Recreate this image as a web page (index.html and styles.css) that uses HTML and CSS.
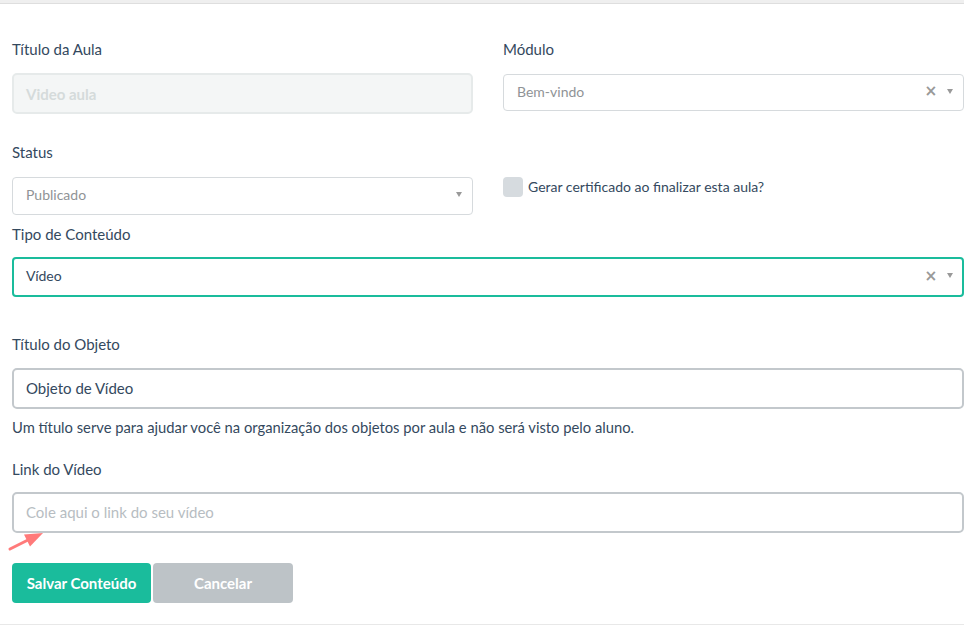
FILE: index.html
```html
<!DOCTYPE html>
<html lang="pt">
<head>
<meta charset="utf-8">
<title>Conteúdo</title>
<link rel="stylesheet" href="styles.css">
</head>
<body>
<div class="topbar"></div>
<form class="form">
  <div class="row row-1">
    <div class="col">
      <label class="label">Título da Aula</label>
      <div class="input input-disabled"><span class="placeholder-light">Video aula</span></div>
    </div>
    <div class="col col-right">
      <label class="label">Módulo</label>
      <div class="select">
        <span class="select-value muted">Bem-vindo</span>
        <span class="select-clear">×</span>
        <span class="select-arrow-zone"><span class="select-arrow"></span></span>
      </div>
    </div>
  </div>

  <div class="row row-2">
    <div class="col">
      <label class="label">Status</label>
      <div class="select select-status">
        <span class="select-value muted">Publicado</span>
        <span class="select-arrow-zone"><span class="select-arrow"></span></span>
      </div>
    </div>
    <div class="col col-check">
      <div class="check">
        <span class="checkbox"></span>
        <span class="check-text">Gerar certificado ao finalizar esta aula?</span>
      </div>
    </div>
  </div>

  <div class="field field-tipo">
    <label class="label">Tipo de Conteúdo</label>
    <div class="select select-focus">
      <span class="select-value">Vídeo</span>
      <span class="select-clear">×</span>
      <span class="select-arrow-zone"><span class="select-arrow"></span></span>
    </div>
  </div>

  <div class="field field-objeto">
    <label class="label">Título do Objeto</label>
    <div class="input input-text"><span class="value">Objeto de Vídeo</span></div>
    <p class="help">Um título serve para ajudar você na organização dos objetos por aula e não será visto pelo aluno.</p>
  </div>

  <div class="field field-link">
    <label class="label">Link do Vídeo</label>
    <div class="link-wrap">
      <div class="input input-text"><span class="placeholder">Cole aqui o link do seu vídeo</span></div>
      <svg class="pointer" width="46" height="22" viewBox="0 0 46 22">
        <path d="M10 17 L28 8" stroke="#ff7a7a" stroke-width="3" stroke-linecap="round" fill="none"/>
        <polygon points="43,1 24,2.5 30,14.5" fill="#ff7a7a"/>
      </svg>
    </div>
  </div>

  <div class="actions">
    <button type="button" class="btn btn-primary">Salvar Conteúdo</button>
    <button type="button" class="btn btn-default">Cancelar</button>
  </div>
</form>
<div class="bottomline"></div>
</body>
</html>
```

FILE: styles.css
```css
* { box-sizing: border-box; }
html, body { margin: 0; padding: 0; background: #fff; }
body {
  width: 964px;
  font-family: Lato, "Open Sans", "Liberation Sans", sans-serif;
  color: #34495e;
  font-size: 14px;
}
.topbar {
  height: 4px;
  background: #efefef;
  border-bottom: 1px solid #dedede;
}
.form {
  padding: 0 0 0 12px;
}
.row {
  display: grid;
  grid-template-columns: 461px 461px;
  column-gap: 30px;
}
.col { display: flex; flex-direction: column; }
.label {
  display: block;
  font-size: 15px;
  line-height: 20px;
  color: #34495e;
}
.row-1 { margin-top: 35px; }
.row-1 .label { margin-bottom: 14px; }
.row-1 .col-right .label { margin-bottom: 15px; }
.row-2 { margin-top: 28px; }
.row-2 .label { margin-bottom: 15px; }

.input {
  display: flex;
  align-items: center;
  border-radius: 5px;
  font-size: 15px;
}
.input-disabled {
  height: 41px;
  background: #f4f6f6;
  border: 2px solid #e6eaea;
  padding-left: 12px;
}
.placeholder-light { color: #d5dbdb; font-weight: 700; }
.input-text {
  height: 41px;
  border: 2px solid #c3c8cc;
  padding-left: 12px;
  padding-bottom: 1px;
  background: #fff;
}
.value { color: #34495e; }
.placeholder { color: #b7bdc2; }

.select {
  display: flex;
  align-items: center;
  height: 37px;
  border: 1px solid #d6dadd;
  border-radius: 4px;
  padding-left: 13px;
  padding-bottom: 3px;
  background: #fff;
}
.select-status { height: 38px; }
.select-value { flex: 1; font-size: 14px; color: #34495e; }
.select-value.muted { color: #8f9396; }
.select-clear {
  width: 16px;
  text-align: center;
  color: #999;
  font-size: 18px;
  font-weight: 700;
  line-height: 1;
  font-family: "DejaVu Sans", sans-serif;
  transform: scale(0.85);
  margin-right: -2px;
}
.select-arrow-zone {
  width: 26px;
  display: flex;
  justify-content: center;
  padding-right: 1px;
}
.select-arrow {
  width: 0; height: 0;
  border-style: solid;
  border-width: 5px 3.5px 0 3.5px;
  border-color: #999 transparent transparent transparent;
}

.col-check { padding-top: 35px; }
.check { display: flex; align-items: center; gap: 5px; }
.checkbox {
  width: 20px; height: 20px;
  border-radius: 4px;
  background: #d6dbdf;
}
.check-text { font-size: 14px; line-height: 20px; color: #34495e; }

.field-tipo { margin-top: 9px; }
.field-tipo .label { margin-bottom: 13px; }
.select-focus {
  height: 40px;
  border: 2px solid #1abc9c;
  padding-left: 12px;
}
.select-focus .select-arrow-zone { width: 25px; padding-right: 0; }

.field-objeto { margin-top: 37px; }
.field-objeto .label { margin-bottom: 14px; }
.help {
  margin: 8px 0 0;
  font-size: 14.75px;
  line-height: 20px;
  color: #34495e;
}
.field-link { margin-top: 22px; }
.field-link .label { margin-bottom: 13px; }
.link-wrap { position: relative; }
.pointer {
  position: absolute;
  left: -12px;
  top: 40px;
}

.actions {
  display: flex;
  gap: 2px;
  margin-top: 30px;
}
.btn {
  height: 40px;
  border: none;
  border-radius: 4px;
  font-family: Lato, "Open Sans", "Liberation Sans", sans-serif;
  font-size: 15px;
  font-weight: 700;
  color: #fff;
  cursor: pointer;
}
.btn-primary { width: 139px; background: #1abc9c; }
.btn-default { width: 140px; background: #bdc3c7; }
.bottomline {
  margin-top: 21px;
  height: 1px;
  background: #e8e8e8;
}
```
